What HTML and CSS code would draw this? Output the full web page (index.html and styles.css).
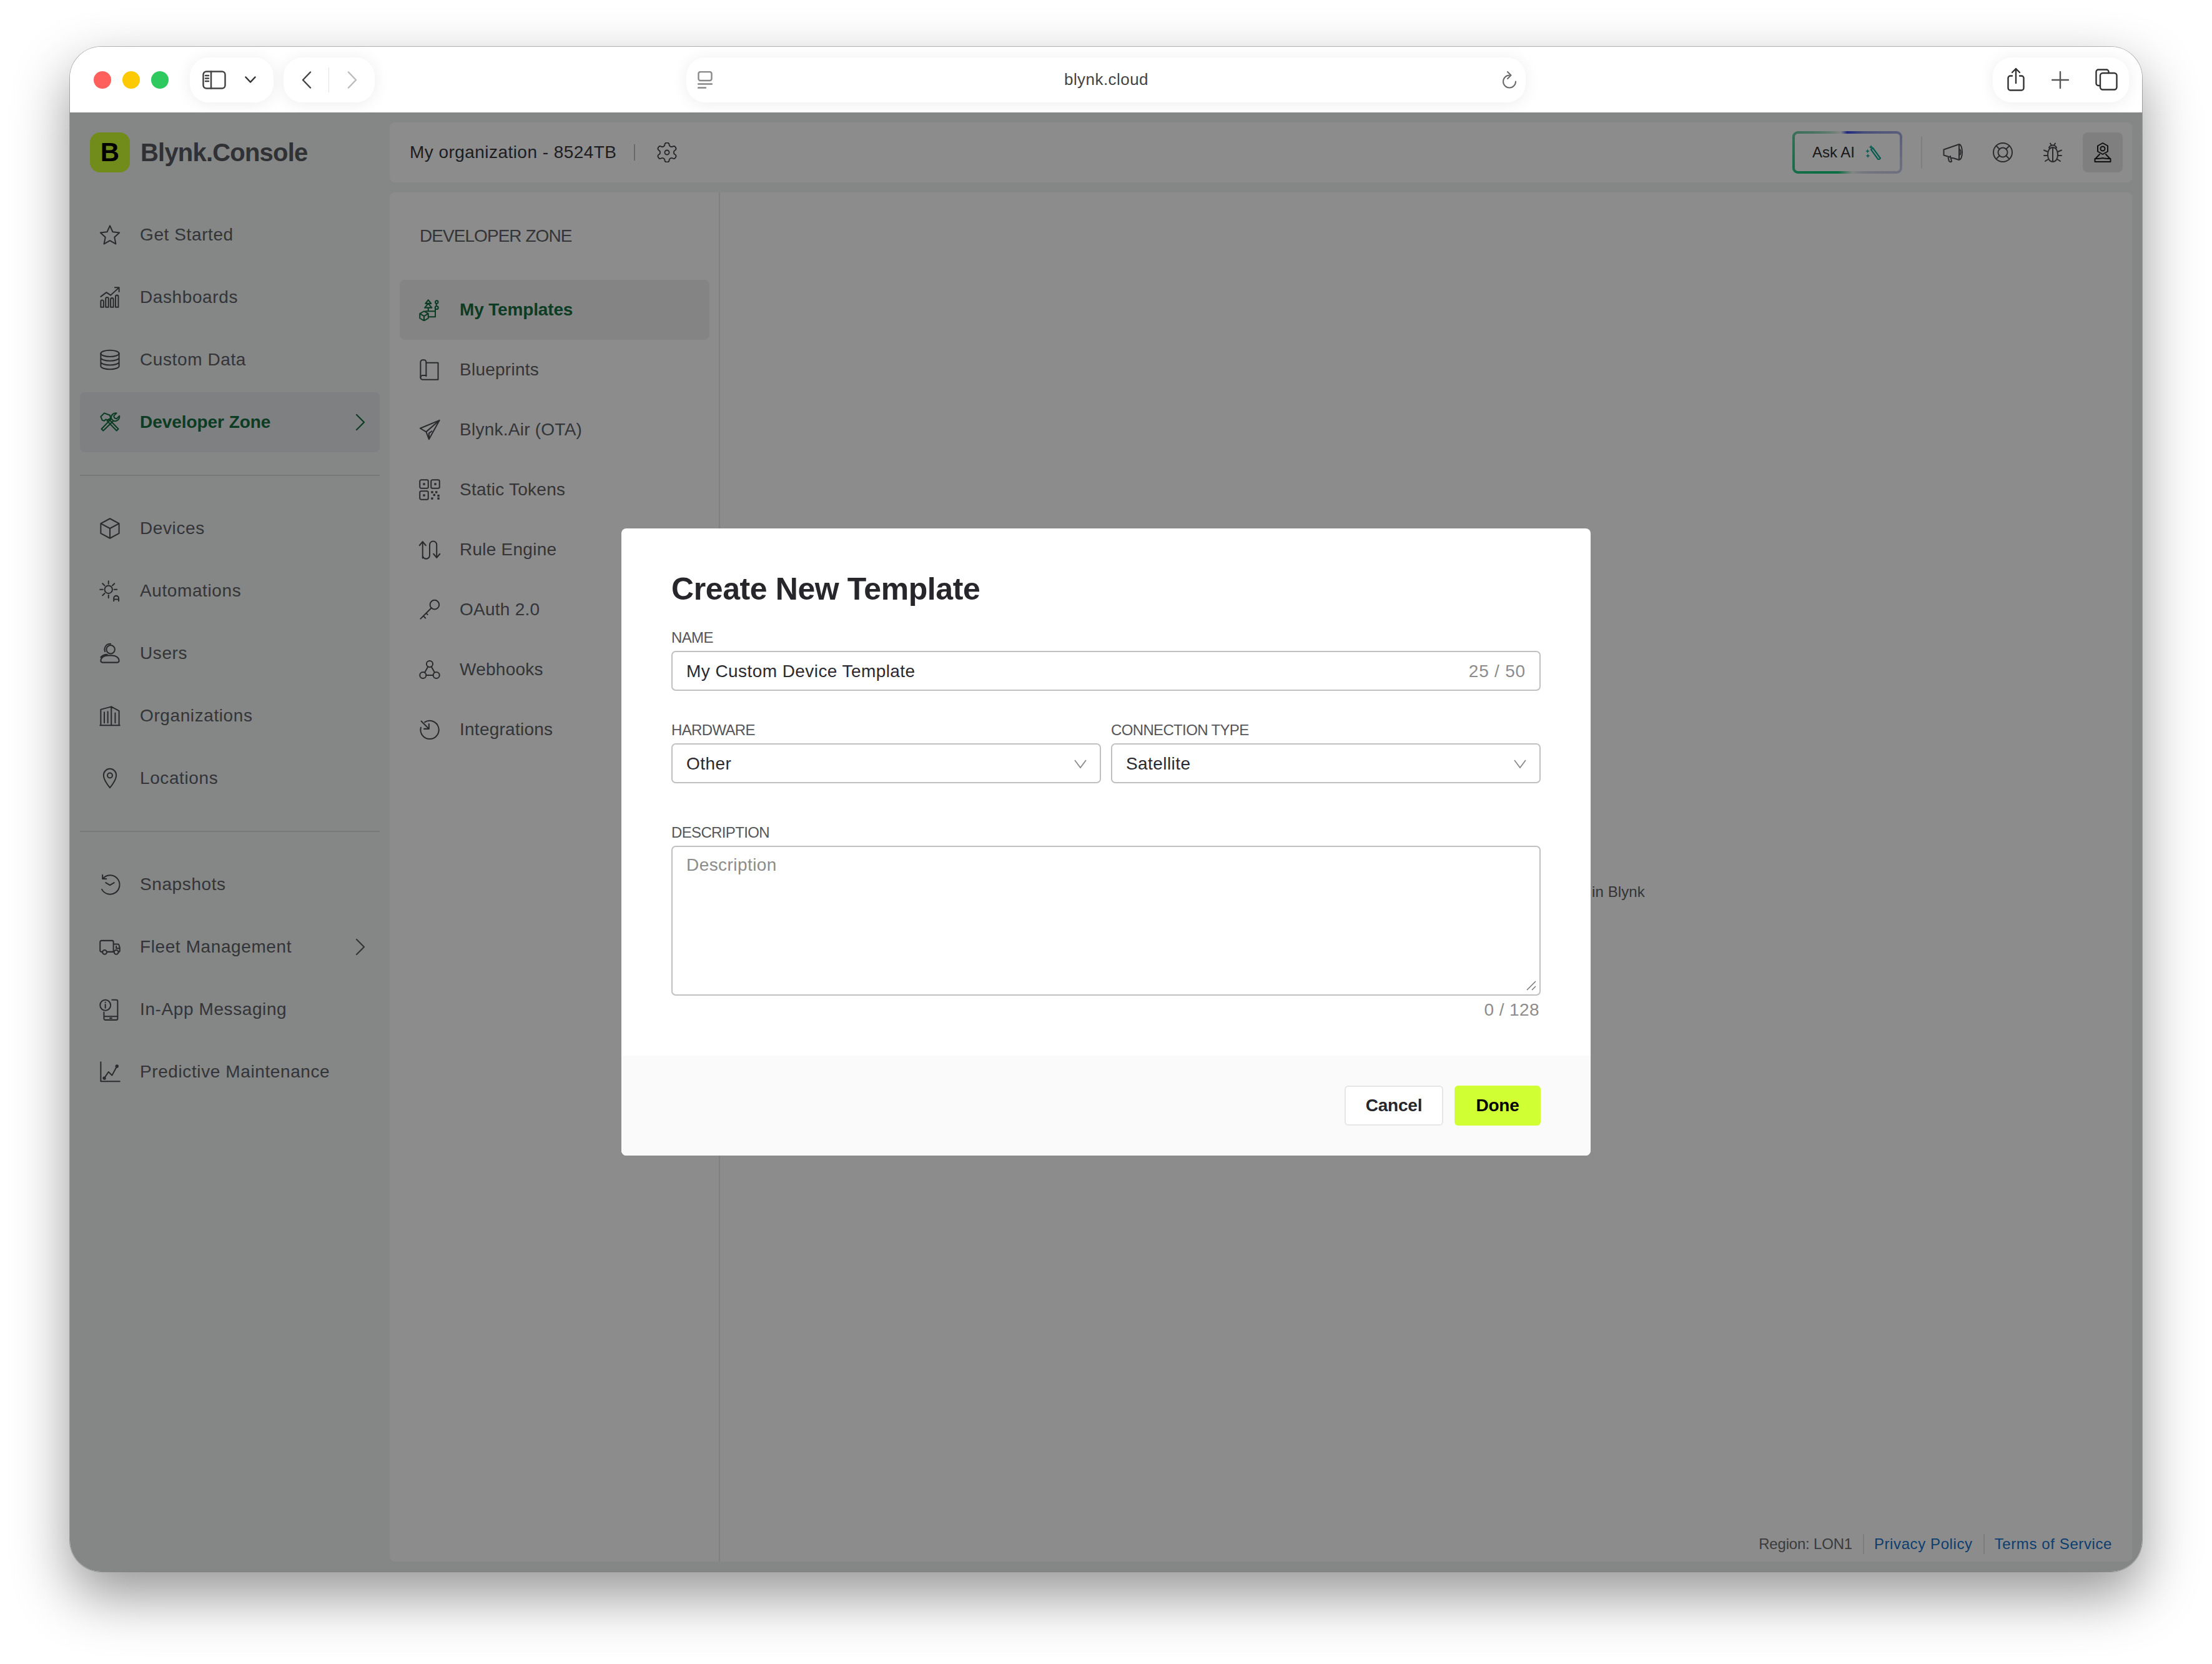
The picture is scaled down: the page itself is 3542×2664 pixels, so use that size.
FILE: index.html
```html
<!DOCTYPE html>
<html lang="en">
<head>
<meta charset="utf-8">
<title>Blynk.Console</title>
<link rel="stylesheet" href="styles.css">
</head>
<body>
<div class="window">
  <header class="toolbar">
    <div class="tb-left">
      <div class="lights"><i class="light red"></i><i class="light yellow"></i><i class="light green"></i></div>
      <div class="pill pill-side">
        <svg class="t-side" viewBox="0 0 38 30"><rect x="1.5" y="1.5" width="35" height="27" rx="5"/><path d="M14 1.500v27M5 8h5M5 12.500h5M5 17h5"/></svg>
        <svg class="t-down" viewBox="0 0 18 11"><path d="M1.500 1.500 9 9.500l7.500-8"/></svg>
      </div>
      <div class="pill pill-nav">
        <svg class="t-chev" viewBox="0 0 16 28"><path d="M14 1.500 2 14l12 12.500"/></svg>
        <i class="t-div"></i>
        <svg class="t-chev t-off" viewBox="0 0 16 28"><path d="M2 1.500 14 14 2 26.500"/></svg>
      </div>
    </div>
    <div class="pill address">
      <svg class="t-page" viewBox="0 0 24 28"><rect x="1.5" y="1" width="21" height="14" rx="3"/><path d="M1 20.500h22M1 26.500h12"/></svg>
      <span class="url">blynk.cloud</span>
      <svg class="t-reload" viewBox="0 0 24 28"><path d="M12 6.500A10 10 0 1 0 22 16.500"/><path d="M9 1l5.500 5.500L9 12"/></svg>
    </div>
    <div class="tb-right">
      <div class="pill pill-actions">
        <svg class="t-share" viewBox="0 0 30 38"><path d="M9 13.500H6A3.500 3.500 0 0 0 2.500 17v16A3.500 3.500 0 0 0 6 36.500h18a3.500 3.500 0 0 0 3.500-3.500V17A3.500 3.500 0 0 0 24 13.500h-3"/><path d="M15 25V2M9 8l6-6 6 6"/></svg>
        <svg class="t-plus" viewBox="0 0 28 28"><path d="M14 1v26M1 14h26"/></svg>
        <svg class="t-tabs" viewBox="0 0 36 35"><path d="M7 27H5a3.500 3.500 0 0 1-3.500-3.500V5A3.500 3.500 0 0 1 5 1.500h13A3.500 3.500 0 0 1 21.500 5v2"/><rect x="8" y="7" width="26.500" height="26.500" rx="4"/></svg>
      </div>
    </div>
  </header>

  <div class="app">
    <aside class="sidebar">
      <div class="brand"><span class="logo">B</span><span class="brand-name">Blynk.Console</span></div>
      <nav class="nav-group">
        <a class="nav-item"><svg class="ic" viewBox="0 0 32 32"><path d="m16 3 4 8.800 9.500 1.100-7 6.500 1.900 9.500L16 24.200 7.600 28.900l1.900-9.500-7-6.500 9.500-1.100z"/></svg><span>Get Started</span></a>
        <a class="nav-item"><svg class="ic" viewBox="0 0 32 32"><path d="M3 30v-8a2 2 0 0 1 4 0v8zM10 30V18a2 2 0 0 1 4 0v12zM17 30V19a2 2 0 0 1 4 0v11zM24 30V15a2 2 0 0 1 4 0v15z"/><path d="M3 15l8-6 6 4L28 3M23 2h6v6"/></svg><span>Dashboards</span></a>
        <a class="nav-item"><svg class="ic" viewBox="0 0 32 32"><ellipse cx="16" cy="7" rx="13" ry="4.500"/><path d="M3 7v18c0 2.500 5.800 4.500 13 4.500s13-2 13-4.500V7M3 13c0 2.500 5.800 4.500 13 4.500S29 15.500 29 13M3 19c0 2.500 5.800 4.500 13 4.500S29 21.500 29 19"/></svg><span>Custom Data</span></a>
        <a class="nav-item nav-active"><svg class="ic" viewBox="0 0 32 32"><path d="M4 25.500 6.500 28 21 14l-3-3zM18 11a6.500 6.500 0 0 1 7.500-8l-4 4 1 3 3 1 4-4a6.500 6.500 0 0 1-8.500 7"/><path d="M28 25.500 25.500 28 12 14l2.500-2.500zM3 8l5-5 8 3 1 4-3 3-4-1-2 2-3-1z"/></svg><span>Developer Zone</span><svg class="chev" viewBox="0 0 16 28"><path d="M2 2 14 14 2 26"/></svg></a>
      </nav>
      <hr class="nav-rule">
      <nav class="nav-group">
        <a class="nav-item"><svg class="ic" viewBox="0 0 32 32"><path d="M16 2 29 9v14l-13 7-13-7V9zM3 9l13 7 13-7M16 16v14"/></svg><span>Devices</span></a>
        <a class="nav-item"><svg class="ic" viewBox="0 0 32 32"><circle cx="14" cy="14" r="5.500"/><path d="M14 2v4M14 22v4M2 14h4M22 14h4M5.500 5.500l3 3M22.500 5.500l-3 3M5.500 22.500l3-3M21.500 30.500v-4a3.500 3.500 0 0 1 7 0v4M21.500 28h7"/></svg><span>Automations</span></a>
        <a class="nav-item"><svg class="ic" viewBox="0 0 32 32"><circle cx="17" cy="10.500" r="6"/><path d="M9 13.500A8 8 0 0 1 17 2.500M3 26.500c0-4.500 5-7.500 10-7.500h6c5 0 10 3 10 7.500 0 1.500-1 2.500-2.500 2.500h-21C4 29 3 28 3 26.500zM3 21.500c2-2.500 5-4 9-4"/></svg><span>Users</span></a>
        <a class="nav-item"><svg class="ic" viewBox="0 0 32 32"><path d="M3 29V7l15-4 11 6v20M2 29.500h28M18 3v26M8 11v15M13 10v16M23.500 12v14"/></svg><span>Organizations</span></a>
        <a class="nav-item"><svg class="ic" viewBox="0 0 32 32"><path d="M16 2.500a9 9 0 0 1 9 9.500C25 19 16 29.500 16 29.500S7 19 7 12a9 9 0 0 1 9-9.500z"/><circle cx="16" cy="12" r="3.500"/></svg><span>Locations</span></a>
      </nav>
      <hr class="nav-rule">
      <nav class="nav-group">
        <a class="nav-item"><svg class="ic" viewBox="0 0 32 32"><path d="M7 6.600A13.500 13.500 0 1 1 4.500 23M5.500 2.500v5.500H11M10 13.500l6 3.500 6-3.500"/></svg><span>Snapshots</span></a>
        <a class="nav-item"><svg class="ic" viewBox="0 0 32 32"><path d="M5 23H4a2 2 0 0 1-2-2V9a2 2 0 0 1 2-2h15a2 2 0 0 1 2 2v14h-9M21 12h6a2 2 0 0 1 2 1.500l1 3.500v5a1 1 0 0 1-1 1M25 15v3h4"/><circle cx="8.500" cy="23.500" r="3"/><circle cx="25" cy="23.500" r="3"/></svg><span>Fleet Management</span><svg class="chev" viewBox="0 0 16 28"><path d="M2 2 14 14 2 26"/></svg></a>
        <a class="nav-item"><svg class="ic" viewBox="0 0 32 32"><path d="M19 2.500h6a2 2 0 0 1 2 2V29a2 2 0 0 1-2 2H9.500a2 2 0 0 1-2-2v-9M7.500 26H27M16 28.500h2.500"/><circle cx="9.500" cy="10" r="7.500"/><path d="M9.500 9v5M9.500 5.800v.4"/></svg><span>In-App Messaging</span></a>
        <a class="nav-item"><svg class="ic" viewBox="0 0 32 32"><path d="M3 2v27.500h27M8 25l6-9 5 5 7-13"/><circle cx="8" cy="25" r="1.500"/><circle cx="26" cy="8" r="1.500"/></svg><span>Predictive Maintenance</span></a>
      </nav>
    </aside>

    <div class="content">
      <div class="topbar">
        <span class="org">My organization - 8524TB</span>
        <i class="org-sep"></i>
        <svg class="hd-gear" viewBox="2 2 20 20"><path d="M12.220 2.300h-.44a2 2 0 0 0-2 1.700v.18a2 2 0 0 1-1 1.730l-.43.25a2 2 0 0 1-2 0l-.15-.08a2 2 0 0 0-2.730.73l-.22.38a2 2 0 0 0 .73 2.730l.15.1a2 2 0 0 1 1 1.720v.51a2 2 0 0 1-1 1.740l-.15.09a2 2 0 0 0-.73 2.730l.22.38a2 2 0 0 0 2.730.73l.15-.08a2 2 0 0 1 2 0l.43.25a2 2 0 0 1 1 1.730V20a2 2 0 0 0 2 1.700h.44a2 2 0 0 0 2-1.700v-.18a2 2 0 0 1 1-1.730l.43-.25a2 2 0 0 1 2 0l.15.08a2 2 0 0 0 2.730-.73l.22-.39a2 2 0 0 0-.73-2.730l-.15-.08a2 2 0 0 1-1-1.740v-.5a2 2 0 0 1 1-1.740l.15-.09a2 2 0 0 0 .73-2.730l-.22-.38a2 2 0 0 0-2.730-.73l-.15.08a2 2 0 0 1-2 0l-.43-.25a2 2 0 0 1-1-1.730V4a2 2 0 0 0-2-1.700z"/><circle cx="12" cy="12" r="2.200"/></svg>
        <div class="top-actions">
          <div class="ask"><span>Ask AI</span><svg class="wand" viewBox="0 0 25 24"><path class="wand-stick" d="M9 7.500l3-2.500 12 16.500-3 2.500z"/><path class="wand-spark" d="M9 0l1 2.500 2.500 1L10 4.500 9 7 8 4.500l-2.500-1L8 2.500zM3.500 6.500l1 2.500 2.500 1-2.500 1-1 2.500-1-2.500L0 10l2.500-1zM4 14l1 2.500 2.500 1-2.500 1L4 21l-1-2.500-2.500-1 2.500-1z"/></svg></div>
          <i class="act-sep"></i>
          <span class="act"><svg class="hd-ic32" viewBox="0 0 32 32"><path d="M1.500 11.500 26 3v25L1.500 20.500zM26 3c2.800 0 5 5.500 5 12.500S28.800 28 26 28M26 11c1.500 0 2.500 2 2.500 4.500S27.500 20 26 20M8 22.500l2 7.500c.5 1.500 4.500 1.500 4 0l-2-8"/></svg></span>
          <span class="act"><svg class="hd-ic32" viewBox="0 0 32 32"><circle cx="16" cy="16" r="15"/><circle cx="16" cy="16" r="7.500"/><path d="M5.400 5.400l5.300 5.300M26.600 5.400l-5.300 5.300M5.400 26.600l5.300-5.300M26.600 26.600l-5.300-5.300"/></svg></span>
          <span class="act"><svg class="hd-ic32" viewBox="0 0 32 32"><path d="M16 8c5 0 8 5 8 11.500S21 31 16 31 8 26 8 19.500 11 8 16 8zM16 8v23M10 8.500a6.500 6.500 0 0 1 12 0M12 1.500l2 3M20 1.500l-2 3M8 15l-6-2.500M24 15l6-2.500M8 21H2M24 21h6M9.500 26.500 4 30M22.500 26.500 28 30"/></svg></span>
          <span class="act act-on"><svg class="hd-ic32" viewBox="0 0 32 32"><path d="M16 1l8 4.500v9L16 19l-8-4.500v-9z"/><circle cx="16" cy="10" r="3.500"/><path d="M11 19 3.500 27v4h25v-4L21 19M3.500 26c4 0 8.500 0 12.500-1 4 1 8.500 1 12.500 1"/></svg></span>
        </div>
      </div>

      <div class="panel">
        <section class="subnav">
          <h2 class="sub-title">DEVELOPER ZONE</h2>
          <a class="sub-item sub-active"><svg class="ic" viewBox="0 0 32 32"><path d="M14 2l-4 5h8zM14 7l-5 6h10zM14 13v4M10 18h14v-3M24 18v8H15M25.500 8v2"/><circle cx="26" cy="5" r="2"/><circle cx="26" cy="13" r="2.200"/><path d="M8 18l6 3.500v6.500l-6 3.500-6-3.500v-6.500zM2 21.500 8 25l6-3.500M8 25v6.500"/></svg><span>My Templates</span></a>
          <a class="sub-item"><svg class="ic" viewBox="0 0 32 32"><path d="M3 27V5a3 3 0 0 1 3-3h2a3 3 0 0 1 3 3v20"/><path d="M11 6h17v24H6a3 3 0 0 1-3-3 3 3 0 0 1 3-3h5"/></svg><span>Blueprints</span></a>
          <a class="sub-item"><svg class="ic" viewBox="0 0 32 32"><path d="M30 2.500 2.500 14l8.500 5 4 10.500zM30 2.500 11 19M15 29.500V21l4-3"/></svg><span>Blynk.Air (OTA)</span></a>
          <a class="sub-item"><svg class="ic" viewBox="0 0 32 32"><rect x="2" y="2" width="12" height="12" rx="2"/><rect x="18" y="2" width="12" height="12" rx="2"/><rect x="2" y="18" width="12" height="12" rx="2"/><rect class="solid" x="6.500" y="6.500" width="3" height="3"/><rect class="solid" x="22.500" y="6.500" width="3" height="3"/><rect class="solid" x="6.500" y="22.500" width="3" height="3"/><rect class="solid" x="18" y="18" width="3" height="3"/><rect class="solid" x="24" y="18" width="3" height="3"/><rect class="solid" x="21" y="22" width="3" height="3"/><rect class="solid" x="27" y="23" width="3" height="3"/><rect class="solid" x="18" y="27" width="3" height="3"/><rect class="solid" x="27" y="27" width="3" height="3"/></svg><span>Static Tokens</span></a>
          <a class="sub-item"><svg class="ic" viewBox="0 0 32 32"><path d="M6 28V5M1.500 10 6 4.500 10.500 10M6 24a5 5 0 0 0 10 0V9a5 5 0 0 1 10 0v18M21.500 22l4.500 5.500 4.500-5.500"/></svg><span>Rule Engine</span></a>
          <a class="sub-item"><svg class="ic" viewBox="0 0 32 32"><circle cx="23" cy="9" r="6.500"/><path d="M18.500 13.500 3 29M7 25l3 3M11 21l2 2"/></svg><span>OAuth 2.0</span></a>
          <a class="sub-item"><svg class="ic" viewBox="0 0 32 32"><circle cx="16" cy="8" r="4.500"/><circle cx="6.500" cy="24" r="4.500"/><circle cx="25.500" cy="24" r="4.500"/><path d="M13.500 12 9 20M18.500 12l4.500 8M11 24h10"/></svg><span>Webhooks</span></a>
          <a class="sub-item"><svg class="ic" viewBox="0 0 32 32"><path d="M9 5.500A13 13 0 1 1 3.500 13M4 4l11 11M15 8v7H8"/></svg><span>Integrations</span></a>
        </section>
        <section class="stage">
          <p class="stage-text">in Blynk</p>
          <footer class="legal">
            <span class="region">Region: LON1</span>
            <i class="legal-sep"></i>
            <a class="legal-link">Privacy Policy</a>
            <i class="legal-sep"></i>
            <a class="legal-link">Terms of Service</a>
          </footer>
        </section>
      </div>
    </div>

    <div class="overlay">
      <div class="modal">
        <div class="modal-body">
          <h1 class="modal-title">Create New Template</h1>
          <div class="field">
            <label class="label">NAME</label>
            <div class="control"><span class="value">My Custom Device Template</span><span class="count">25 / 50</span></div>
          </div>
          <div class="row">
            <div class="field">
              <label class="label">HARDWARE</label>
              <div class="control"><span class="value">Other</span><svg class="caret" viewBox="0 0 20 14"><path d="M1 1l9 12 9-12"/></svg></div>
            </div>
            <div class="field">
              <label class="label">CONNECTION TYPE</label>
              <div class="control"><span class="value">Satellite</span><svg class="caret" viewBox="0 0 20 14"><path d="M1 1l9 12 9-12"/></svg></div>
            </div>
          </div>
          <div class="field field-desc">
            <label class="label">DESCRIPTION</label>
            <div class="control area"><span class="placeholder">Description</span><svg class="grip" viewBox="0 0 16 16"><path d="M1 15 15 1M9 15l6-6"/></svg></div>
            <div class="area-count">0 / 128</div>
          </div>
        </div>
        <div class="modal-foot">
          <button class="btn btn-ghost">Cancel</button>
          <button class="btn btn-primary">Done</button>
        </div>
      </div>
    </div>
  </div>
</div>
</body>
</html>
```
FILE: styles.css
```css
* { box-sizing: border-box; }
html, body { margin: 0; height: 100%; }
body {
  background: #fff;
  padding: 75px 112px 148px;
  font-family: "Liberation Sans", Arial, sans-serif;
  overflow: hidden;
}
a { color: inherit; text-decoration: none; }
i { display: block; }

.window {
  width: 3318px;
  height: 2441px;
  border-radius: 50px;
  overflow: hidden;
  display: flex;
  flex-direction: column;
  background: #fff;
  box-shadow: 0 0 0 1px rgba(0,0,0,.25), 0 38px 90px rgba(0,0,0,.42);
}

/* Browser chrome */
.toolbar {
  height: 105px;
  flex: none;
  display: grid;
  grid-template-columns: 1fr 1344px 1fr;
  align-items: center;
  padding: 0 21px;
  background: #fff;
}
.tb-left { display: flex; align-items: center; padding-left: 17px; }
.tb-right { display: flex; justify-content: flex-end; }
.lights { display: flex; gap: 18px; margin-right: 34px; }
.light { width: 28px; height: 28px; border-radius: 50%; }
.red { background: #fe5f5d; }
.yellow { background: #fdc900; }
.green { background: #2dc85e; }
.pill {
  height: 72px;
  border-radius: 30px;
  background: #fff;
  box-shadow: 0 2px 26px rgba(0,0,0,.075);
  display: flex;
  align-items: center;
}
.toolbar svg { fill: none; stroke-linecap: round; stroke-linejoin: round; flex: none; }
.pill-side { width: 134px; padding-left: 20px; margin-right: 16px; }
.t-side { width: 38px; height: 30px; stroke: #444; stroke-width: 2.5; }
.t-down { width: 18px; height: 11px; stroke: #333; stroke-width: 2.5; margin-left: 30px; }
.pill-nav { width: 146px; padding-left: 29px; }
.t-chev { width: 16px; height: 28px; stroke: #444; stroke-width: 2.5; }
.t-off { stroke: #bcbcbc; }
.t-div { width: 1px; height: 40px; background: #e2e2e2; margin: 0 29px 0 27px; }
.address { padding: 0 14px 0 18px; position: relative; justify-content: space-between; }
.t-page { width: 24px; height: 28px; stroke: #888; stroke-width: 2.4; }
.url { font-size: 26px; color: #444; letter-spacing: .45px; margin-left: -3px; }
.t-reload { width: 24px; height: 28px; stroke: #6a6a6a; stroke-width: 2; }
.pill-actions { width: 218px; padding-left: 22px; }
.t-share { width: 30px; height: 38px; stroke: #333; stroke-width: 2.4; margin-top: -2px; }
.t-plus { width: 28px; height: 28px; stroke: #555; stroke-width: 2.4; margin-left: 42px; }
.t-tabs { width: 36px; height: 35px; stroke: #333; stroke-width: 2.4; margin-left: 42px; }

/* App shell */
.app { flex: 1; min-height: 0; display: flex; position: relative; background: #f2f4f5; }
.sidebar { width: 512px; flex: none; padding: 0 16px; }
.brand { height: 148px; padding: 32px 0 0 16px; display: flex; align-items: flex-start; }
.logo {
  width: 64px; height: 64px; border-radius: 16px;
  background: #d0ff33; color: #000;
  display: flex; align-items: center; justify-content: center;
  font-size: 42px; font-weight: 700;
}
.brand-name {
  margin-left: 17px; height: 64px; line-height: 64px;
  font-size: 40px; font-weight: 700; letter-spacing: -.8px; color: #575960;
}
.nav-group { display: flex; flex-direction: column; gap: 4px; }
.nav-rule { height: 2px; border: 0; margin: 36px 0; background: #d9dadc; }
.nav-item {
  height: 96px; border-radius: 8px;
  display: flex; align-items: center; gap: 32px;
  padding: 0 23px 0 32px;
  font-size: 28px; letter-spacing: .6px; color: #5d6166;
}
.nav-item span { flex: 1; }
.nav-active { background: #e7e9eb; color: #166d41; font-weight: 700; letter-spacing: -.05px; }
.ic { width: 36px; height: 36px; margin: -2px; flex: none; fill: none; stroke: #4c4f53; stroke-width: 1.8; stroke-linecap: round; stroke-linejoin: round; }
.nav-active .ic, .sub-active .ic { stroke: #166d41; }
.ic .solid { fill: #4c4f53; stroke: none; }
.chev { width: 16px; height: 28px; flex: none; fill: none; stroke: currentColor; stroke-width: 2.2; stroke-linecap: round; stroke-linejoin: round; }

.content { flex: 1; min-width: 0; display: flex; flex-direction: column; gap: 16px; padding: 16px 16px 16px 0; }
.topbar {
  height: 96px; flex: none; border-radius: 8px; background: #fff;
  display: flex; align-items: center; padding: 0 15px 0 32px;
}
.org { font-size: 28px; font-weight: 500; color: #36383e; letter-spacing: .45px; width: 332px; white-space: nowrap; }
.org-sep { width: 2px; height: 26px; background: #bfc0c2; margin: 0 35px 0 27px; }
.hd-gear { width: 32px; height: 32px; fill: none; stroke: #45464a; stroke-width: 1.15; }
.top-actions { margin-left: auto; display: flex; align-items: center; }
.ask {
  width: 176px; height: 68px; padding-left: 28px;
  border: 4px solid transparent; border-radius: 9px;
  background:
    linear-gradient(#fff, #fff) padding-box,
    conic-gradient(from 0deg, #3648ec 0deg, #7f8cdc 40deg, #c3c8e6 100deg, #d6d8e6 140deg, #f0f3f4 165deg, #12c877 205deg, #12c877 235deg, #5ec79c 285deg, #b8e4cf 320deg, #f2f4f4 342deg, #3648ec 360deg) border-box;
  display: flex; align-items: center;
  font-size: 24px; font-weight: 500; color: #2f2f2f;
}
.wand { width: 25px; height: 24px; margin-left: 17px; }
.wand-stick { fill: none; stroke: #12a896; stroke-width: 2.2; stroke-linejoin: round; }
.wand-spark { fill: #12a896; }
.act-sep { width: 2px; height: 50px; background: #e6e6e6; margin: 0 17px 0 30px; }
.act { width: 64px; height: 64px; border-radius: 8px; display: flex; align-items: center; justify-content: center; margin-right: 16px; }
.act:last-child { margin-right: 0; }
.act-on { background: #e7e7e7; }
.hd-ic32 { width: 32px; height: 32px; fill: none; stroke: #505154; stroke-width: 2; stroke-linecap: round; stroke-linejoin: round; overflow: visible; }
.act-on .hd-ic32 { stroke: #202020; }

.panel { flex: 1; min-height: 0; border-radius: 8px; background: #fff; display: flex; overflow: hidden; }
.subnav { width: 529px; flex: none; padding: 0 15px 0 16px; border-right: 2px solid #e8e8e8; }
.sub-title {
  margin: 0; height: 140px; padding-left: 32px;
  display: flex; align-items: center;
  font-size: 28px; font-weight: 400; letter-spacing: -.95px; color: #5d6166;
}
.sub-item {
  height: 96px; border-radius: 8px;
  display: flex; align-items: center; gap: 32px; padding-left: 32px;
  font-size: 28px; letter-spacing: .25px; color: #5d6166;
}
.sub-active { background: #f0f0f0; color: #166d41; font-weight: 700; letter-spacing: -.15px; }

.stage { flex: 1; min-width: 0; display: flex; flex-direction: column; }
.stage-text { margin: 1105px 0 0 1396px; font-size: 24px; line-height: 30px; color: #5d6166; letter-spacing: .1px; }
.legal {
  margin-top: auto; height: 32px; margin-bottom: 12px; padding-right: 32px;
  display: flex; align-items: center; justify-content: flex-end;
  font-size: 24px;
}
.region { color: #6d6d6d; letter-spacing: -.2px; }
.legal-sep { width: 2px; height: 32px; background: #e4e4e4; margin: 0 16px 0 17px; }
.legal-link { color: #1672cc; letter-spacing: .6px; }

/* Modal */
.overlay {
  position: absolute; inset: 0;
  background: rgba(0,0,0,.45);
  display: flex; align-items: center; justify-content: center;
}
.modal { width: 1552px; height: 1004px; border-radius: 8px; background: #fff; overflow: hidden; display: flex; flex-direction: column; }
.modal-body { height: 844px; flex: none; padding: 0 80px; }
.modal-title {
  margin: 0; height: 156px; padding-top: 61px;
  font-size: 50px; line-height: 72px; font-weight: 700; letter-spacing: -.4px; color: #26262b;
}
.field { display: flex; flex-direction: column; }
.label { height: 40px; line-height: 38px; font-size: 24px; letter-spacing: -.65px; color: #55565a; }
.control {
  height: 64px; border: 2px solid #c0c0c0; border-radius: 7px;
  display: flex; align-items: center; justify-content: space-between;
  padding: 2px 22px 0;
}
.value { font-size: 28px; letter-spacing: .43px; color: #2a2a30; }
.count { font-size: 28px; letter-spacing: .8px; color: #8c8c8c; }
.row { display: grid; grid-template-columns: 1fr 1fr; gap: 16px; margin-top: 44px; }
.caret { width: 20px; height: 14px; fill: none; stroke: #8a8a8a; stroke-width: 1.8; margin-right: -1px; }
.field-desc { margin-top: 60px; }
.area { height: 240px; align-items: flex-start; padding-top: 13px; position: relative; }
.placeholder { font-size: 28px; letter-spacing: .43px; color: #8c8c8c; }
.grip { position: absolute; right: 5px; bottom: 6px; width: 16px; height: 16px; fill: none; stroke: #777; stroke-width: 1.5; }
.area-count { margin-top: 8px; height: 30px; line-height: 30px; text-align: right; font-size: 28px; letter-spacing: .4px; color: #8c8c8c; padding-right: 2px; }
.modal-foot { flex: 1; background: #fafafa; display: flex; justify-content: flex-end; gap: 18px; padding: 48px 80px 0 0; }
.btn { height: 64px; border-radius: 6px; padding: 0 30px; font-family: inherit; font-size: 28px; font-weight: 700; }
.btn-ghost { width: 158px; background: #fff; border: 2px solid #e6e6e6; color: #26262b; letter-spacing: -.2px; }
.btn-primary { width: 138px; background: #d0ff33; border: 0; color: #000; letter-spacing: -.2px; }
```
